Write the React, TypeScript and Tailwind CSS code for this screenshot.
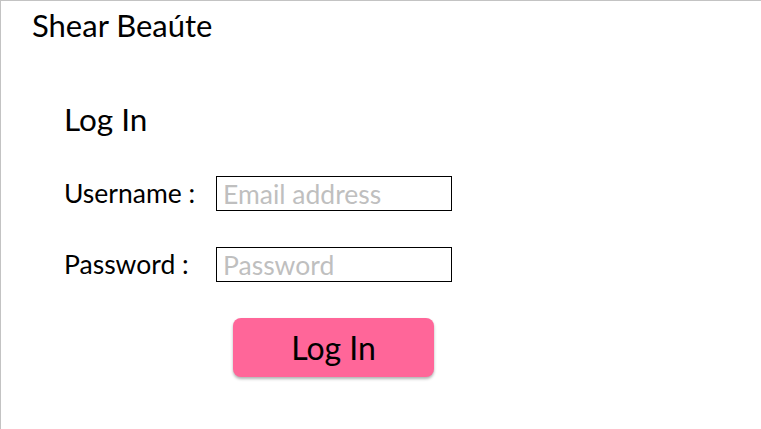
import React from 'react'

export default function App() {
  return (
    <div className="h-[429px] w-[761px] overflow-hidden border-l border-t border-[#c3c3c3] bg-white font-['Lato','Open_Sans',sans-serif] text-black">
      {/* brand */}
      <div className="pl-[31px] pt-[6px] text-[31px] leading-[36px]">Shear Beaúte</div>

      <form className="flex flex-col pl-[63px]" onSubmit={(e) => e.preventDefault()}>
        <h1 className="mt-[58px] text-[31.5px] leading-[36px]">Log In</h1>

        <div className="mt-[39px] flex h-[35px] items-center">
          <label className="w-[152px] text-[26.5px] leading-[35px]">Username :</label>
          <input
            type="email"
            placeholder="Email address"
            className="h-[35px] w-[236px] border border-black pl-[6px] text-[26.5px] leading-[33px] outline-none placeholder:text-[#bfbfbf]"
          />
        </div>

        <div className="mt-[36px] flex h-[35px] items-center">
          <label className="w-[152px] text-[26.5px] leading-[35px]">Password :</label>
          <input
            type="password"
            placeholder="Password"
            className="h-[35px] w-[236px] border border-black pl-[6px] text-[26.5px] leading-[33px] outline-none placeholder:text-[#bfbfbf]"
          />
        </div>

        <button
          type="submit"
          className="ml-[169px] mt-[36px] h-[59px] w-[201px] rounded-[8px] bg-[#ff6699] text-[32px] shadow-[0_2px_3px_rgba(0,0,0,0.3)]"
        >
          Log In
        </button>
      </form>
    </div>
  )
}
